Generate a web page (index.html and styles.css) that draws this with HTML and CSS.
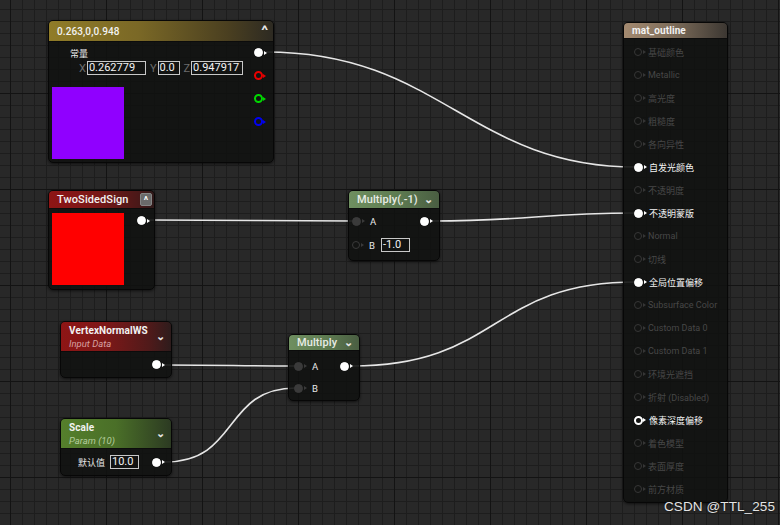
FILE: index.html
```html
<!DOCTYPE html>
<html>
<head>
<meta charset="utf-8">
<link rel="stylesheet" href="styles.css">
</head>
<body>
<div class="canvas">
  <svg class="wires" width="780" height="525" viewBox="0 0 780 525">
    <path d="M266 52 C 440 52, 470 167, 636 167"/>
    <path d="M148 220 C 250 220, 260 221, 354 221"/>
    <path d="M432 221 C 530 221, 540 213, 636 213"/>
    <path d="M164 365 C 230 365, 236 366, 296 366"/>
    <path d="M165 462 C 240 462, 222 388, 296 388"/>
    <path d="M352 366 C 500 366, 490 282, 636 282"/>
  </svg>

  <!-- Constant3Vector -->
  <div class="node n-const">
    <div class="head gold">
      <span class="title">0.263,0,0.948</span>
      <span class="caret up">^</span>
    </div>
    <div class="body const-body">
      <div class="const-left">
        <div class="lbl">常量</div>
        <div class="vec">
          <span class="axis">X</span><span class="box bx">0.262779</span>
          <span class="axis">Y</span><span class="box by">0.0</span>
          <span class="axis">Z</span><span class="box bz">0.947917</span>
        </div>
        <div class="swatch purple"></div>
      </div>
      <div class="pincol">
        <span class="pin filled white"></span>
        <span class="pin red"></span>
        <span class="pin green"></span>
        <span class="pin blue"></span>
      </div>
    </div>
  </div>

  <!-- TwoSidedSign -->
  <div class="node n-two">
    <div class="head red-h">
      <span class="title">TwoSidedSign</span>
      <span class="btn">^</span>
    </div>
    <div class="body two-body">
      <div class="swatch redsw"></div>
      <span class="pin filled white"></span>
    </div>
  </div>

  <!-- Multiply(,-1) -->
  <div class="node n-mul1">
    <div class="head green-h">
      <span class="title light">Multiply(,-1)</span>
      <span class="caret">&#8964;</span>
    </div>
    <div class="body mul-body">
      <div class="row">
        <span class="pin filled gray"></span><span class="plabel">A</span>
        <span class="spacer"></span>
        <span class="pin filled white"></span>
      </div>
      <div class="row">
        <span class="pin gray"></span><span class="plabel">B</span>
        <span class="box bb">-1.0</span>
      </div>
    </div>
  </div>

  <!-- VertexNormalWS -->
  <div class="node n-vn">
    <div class="head red-h tall">
      <div class="titles">
        <span class="title b">VertexNormalWS</span>
        <span class="sub red-sub">Input Data</span>
      </div>
      <span class="caret">&#8964;</span>
    </div>
    <div class="body out-body">
      <span class="pin filled white"></span>
    </div>
  </div>

  <!-- Multiply -->
  <div class="node n-mul2">
    <div class="head green-h short">
      <span class="title light">Multiply</span>
      <span class="caret">&#8964;</span>
    </div>
    <div class="body mul2-body">
      <div class="row">
        <span class="pin filled gray"></span><span class="plabel">A</span>
        <span class="spacer"></span>
        <span class="pin filled white"></span>
      </div>
      <div class="row">
        <span class="pin filled gray"></span><span class="plabel">B</span>
      </div>
    </div>
  </div>

  <!-- Scale -->
  <div class="node n-scale">
    <div class="head green2-h tall">
      <div class="titles">
        <span class="title b">Scale</span>
        <span class="sub green-sub">Param (10)</span>
      </div>
      <span class="caret">&#8964;</span>
    </div>
    <div class="body scale-body">
      <span class="plabel cjk">默认值</span>
      <span class="box bs">10.0</span>
      <span class="pin filled white"></span>
    </div>
  </div>

  <!-- mat_outline -->
  <div class="node n-mat">
    <div class="head tan-h">
      <span class="title b">mat_outline</span>
    </div>
    <div class="body mat-body">
      <div class="mrow"><span class="pin dim"></span><span>基础颜色</span></div>
      <div class="mrow"><span class="pin dim"></span><span>Metallic</span></div>
      <div class="mrow"><span class="pin dim"></span><span>高光度</span></div>
      <div class="mrow"><span class="pin dim"></span><span>粗糙度</span></div>
      <div class="mrow"><span class="pin dim"></span><span>各向异性</span></div>
      <div class="mrow on"><span class="pin filled white"></span><span>自发光颜色</span></div>
      <div class="mrow"><span class="pin dim"></span><span>不透明度</span></div>
      <div class="mrow on"><span class="pin filled white"></span><span>不透明蒙版</span></div>
      <div class="mrow"><span class="pin dim"></span><span>Normal</span></div>
      <div class="mrow"><span class="pin dim"></span><span>切线</span></div>
      <div class="mrow on"><span class="pin filled white"></span><span>全局位置偏移</span></div>
      <div class="mrow"><span class="pin dim"></span><span>Subsurface Color</span></div>
      <div class="mrow"><span class="pin dim"></span><span>Custom Data 0</span></div>
      <div class="mrow"><span class="pin dim"></span><span>Custom Data 1</span></div>
      <div class="mrow"><span class="pin dim"></span><span>环境光遮挡</span></div>
      <div class="mrow"><span class="pin dim"></span><span>折射 (Disabled)</span></div>
      <div class="mrow on"><span class="pin whiteo"></span><span>像素深度偏移</span></div>
      <div class="mrow"><span class="pin dim"></span><span>着色模型</span></div>
      <div class="mrow"><span class="pin dim"></span><span>表面厚度</span></div>
      <div class="mrow"><span class="pin dim"></span><span>前方材质</span></div>
    </div>
  </div>

  <div class="watermark">CSDN @TTL_255</div>
</div>
</body>
</html>
```

FILE: styles.css
```css
html, body {
  margin: 0;
  padding: 0;
  background: #262626;
}

.canvas {
  position: relative;
  width: 780px;
  height: 525px;
  overflow: hidden;
  font-family: "Roboto", "Noto Sans CJK SC", sans-serif;
  color: #fff;
  background-color: #282828;
  background-image:
    linear-gradient(to right, #131313 0, #131313 1.5px, transparent 1.5px),
    linear-gradient(to bottom, #131313 0, #131313 1.5px, transparent 1.5px),
    linear-gradient(to right, #1d1d1d 0, #1d1d1d 1px, transparent 1px),
    linear-gradient(to bottom, #1d1d1d 0, #1d1d1d 1px, transparent 1px);
  background-size: 96px 96px, 96px 96px, 12px 12px, 12px 12px;
  background-position: 10px 0, 0 93px, 10px 0, 0 9px;
}

.wires {
  position: absolute;
  left: 0;
  top: 0;
  z-index: 1;
}
.wires path {
  fill: none;
  stroke: #e6e6e6;
  stroke-width: 1.6;
}

/* Nodes on the graph canvas */
.node {
  position: absolute;
  z-index: 2;
  box-sizing: border-box;
  background: rgba(17, 18, 17, 0.9);
  border: 1px solid #070707;
  border-radius: 5px;
  box-shadow: 0 1px 3px rgba(0,0,0,0.6);
  overflow: hidden;
  display: flex;
  flex-direction: column;
}
.n-const { left: 48px; top: 20px; width: 226px; height: 143px; }
.n-two   { left: 48px; top: 190px; width: 107px; height: 100px; }
.n-mul1  { left: 348px; top: 190px; width: 92px; height: 71px; }
.n-vn    { left: 60px; top: 321px; width: 112px; height: 57px; }
.n-mul2  { left: 288px; top: 334px; width: 72px; height: 67px; }
.n-scale { left: 60px; top: 418px; width: 112px; height: 58px; }
.n-mat   { left: 623px; top: 22px; width: 105px; height: 481px; }

.head {
  height: 20px;
  flex: none;
  display: flex;
  align-items: center;
  justify-content: space-between;
  padding: 0 6px 0 8px;
  box-sizing: border-box;
  border-bottom: 1px solid #0c0c0c;
}
.head.tall { height: 30px; align-items: center; }
.head.short { height: 16px; }

.gold  { background: linear-gradient(to right, #907c28 0%, #7a6826 40%, #4a3f20 80%, #2d2a22 100%); height: 21px; }
.red-h { background: linear-gradient(to right, #8e1515 0%, #7a1818 45%, #4a1818 85%, #2e1a1a 100%); height: 18px; }
.green-h { background: linear-gradient(to right, #6f8f60 0%, #5f7d52 50%, #4a5e42 100%); height: 18px; }
.green2-h { background: linear-gradient(to right, #557f2c 0%, #4a6f28 50%, #2c3a22 100%); }
.tan-h { background: linear-gradient(to right, #a48a70 0%, #7a6a58 50%, #3c3732 100%); height: 16px; }
.n-vn .head { background: linear-gradient(to right, #8e1515 0%, #7e1818 40%, #501a1a 80%, #2e1c1c 100%); }

.title {
  font-size: 10px;
  font-weight: 500;
  color: #f2f2f2;
  letter-spacing: 0.1px;
  white-space: nowrap;
}
.n-two .title { font-size: 11px; }
.title.light { font-size: 11px; color: #e8ece6; }
.title.b { font-weight: 700; font-size: 10px; }
.titles {
  display: flex;
  flex-direction: column;
  line-height: 13px;
}
.sub {
  font-size: 9.5px;
  font-style: italic;
}
.red-sub { color: #d7a0a0; }
.green-sub { color: #b4cc9c; }

.caret {
  font-size: 11px;
  color: #e8e8e8;
  line-height: 1;
  font-weight: 700;
}
.caret.up { font-size: 12px; margin-right: 0; transform: scaleX(1.3); }

.btn {
  width: 12px;
  height: 13px;
  background: #6a6a6a;
  border: 1px solid #858585;
  box-sizing: border-box;
  border-radius: 2px;
  color: #fff;
  font-size: 10px;
  font-weight: 700;
  line-height: 14px;
  text-align: center;
  margin-right: -4px;
}

.body {
  flex: 1;
  box-sizing: border-box;
}

/* Constant node */
.const-body {
  display: flex;
  justify-content: space-between;
  padding: 6px 7px 0 3px;
}
.const-left { display: flex; flex-direction: column; }
.lbl {
  font-size: 9px;
  line-height: 12px;
  color: #e8e8e8;
  padding-left: 18px;
  font-family: "Noto Sans CJK SC", sans-serif;
}
.vec {
  display: flex;
  align-items: center;
  height: 14px;
  margin-top: 1px;
  padding-left: 27px;
}
.axis {
  font-size: 11px;
  color: #6c6c6c;
  margin-right: 1px;
}
.vec .axis + .box { margin-right: 4px; }
.box {
  box-sizing: border-box;
  height: 14px;
  border: 1px solid #c8c8c8;
  font-size: 11px;
  line-height: 12px;
  padding: 0 1px;
  color: #f2f2f2;
  text-align: left;
}
.bx { width: 59px; }
.by { width: 22px; }
.bz { width: 52px; }
.swatch { width: 72px; height: 72px; }
.purple { background: #9000ff; margin-top: 12px; }
.redsw { background: #ff0000; }

.pincol {
  display: flex;
  flex-direction: column;
  gap: 14px;
  padding-top: 0;
}
.pincol .pin.red, .pincol .pin.green, .pincol .pin.blue { border-width: 2px; width: 9px; height: 9px; }

/* Pins */
.pin {
  position: relative;
  flex: none;
  display: block;
  width: 8px;
  height: 8px;
  border-radius: 50%;
  box-sizing: border-box;
  border: 1.5px solid currentColor;
  margin-right: 3px;
}
.pin::after {
  content: "";
  position: absolute;
  right: -4.5px;
  top: 50%;
  transform: translateY(-50%);
  border-left: 3px solid currentColor;
  border-top: 2px solid transparent;
  border-bottom: 2px solid transparent;
}
.pin.filled { background: currentColor; width: 9px; height: 9px; }
.white { color: #ffffff; }
.whiteo { color: #ffffff; width: 9px; height: 9px; border-width: 2px; }
.red { color: #e80000; }
.green { color: #00d800; }
.blue { color: #0000f0; }
.gray { color: #3a3a3a; }
.dim { color: #363636; }

/* TwoSidedSign */
.two-body {
  display: flex;
  align-items: flex-start;
  padding: 4px 0 0 3px;
  gap: 13px;
}
.two-body .pin { margin-top: 3px; }

/* Multiply nodes */
.row {
  display: flex;
  align-items: center;
  height: 14px;
}
.spacer { flex: 1; }
.plabel {
  font-size: 9.5px;
  color: #e8e8e8;
  margin-left: 6px;
}
.mul-body {
  display: flex;
  flex-direction: column;
  gap: 10px;
  padding: 5px 7px 0 3px;
}
.bb { width: 29px; margin-left: 6px; }
.mul2-body {
  display: flex;
  flex-direction: column;
  gap: 8px;
  padding: 8px 7px 0 5px;
}

/* Output only body */
.out-body {
  display: flex;
  justify-content: flex-end;
  align-items: center;
  padding: 0 7px 0 0;
}
.scale-body {
  display: flex;
  align-items: center;
  justify-content: flex-end;
  padding: 0 7px 0 0;
  gap: 4px;
}
.scale-body .plabel { margin-left: 0; font-size: 9px; margin-right: 1px; }
.cjk { font-family: "Noto Sans CJK SC", sans-serif; }
.bs { width: 29px; margin-right: 9px; }

/* Material result node */
.mat-body {
  display: flex;
  flex-direction: column;
  padding: 6px 0 0 10px;
  gap: 9px;
}
.mrow {
  display: flex;
  align-items: center;
  height: 14px;
  font-size: 9px;
  color: #474747;
  white-space: nowrap;
  font-family: "Roboto", "Noto Sans CJK SC", sans-serif;
}
.mrow .pin { margin-right: 6px; }
.mrow.on { color: #f4f4f4; }

.watermark {
  position: absolute;
  z-index: 3;
  left: 664px;
  top: 499px;
  font-family: "Liberation Sans", "Noto Sans", sans-serif;
  font-size: 13.5px;
  color: #e4e4e4;
  text-shadow: 0 0 2px rgba(0,0,0,0.8);
  letter-spacing: 0.1px;
}
```
